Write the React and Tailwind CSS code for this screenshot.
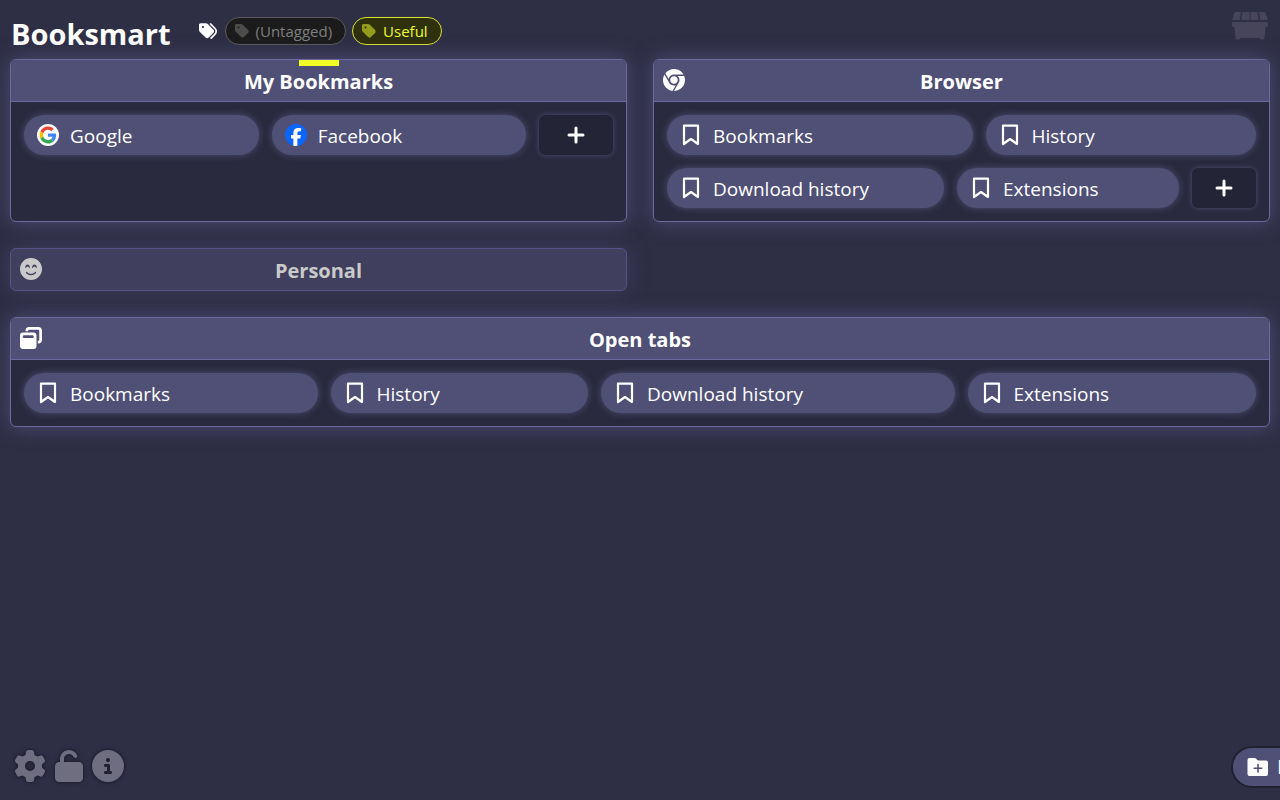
import { FaTags, FaTag, FaChrome, FaGear, FaUnlock, FaCircleInfo, FaFaceSmileBeam, FaWindowRestore } from 'react-icons/fa6'

const panelBase = 'rounded-md border border-[#6b69a0] overflow-clip bg-[#2a2a3e] shadow-[0_0_20px_#504f76]'
const iconButton = 'text-[#6f6e80] drop-shadow-[0_0_2px_#14141f]'

function GoogleIcon() {
  return (
    <svg viewBox="0 0 48 48" className="size-[22px]" aria-hidden="true">
      <circle cx="24" cy="24" r="24" fill="#fff" />
      <g transform="translate(5.5 5.5) scale(0.77)">
        <path fill="#EA4335" d="M24 9.5c3.54 0 6.71 1.22 9.21 3.6l6.85-6.85C35.9 2.38 30.47 0 24 0 14.62 0 6.51 5.38 2.56 13.22l7.98 6.19C12.43 13.72 17.74 9.5 24 9.5z" />
        <path fill="#4285F4" d="M46.98 24.55c0-1.57-.15-3.09-.38-4.55H24v9.02h12.94c-.58 2.96-2.26 5.48-4.78 7.18l7.73 6c4.51-4.18 7.09-10.36 7.09-17.65z" />
        <path fill="#FBBC05" d="M10.53 28.59c-.48-1.45-.76-2.99-.76-4.59s.27-3.14.76-4.59l-7.98-6.19C.92 16.46 0 20.12 0 24c0 3.88.92 7.54 2.56 10.78l7.97-6.19z" />
        <path fill="#34A853" d="M24 48c6.48 0 11.93-2.13 15.89-5.81l-7.73-6c-2.15 1.45-4.92 2.3-8.16 2.3-6.26 0-11.57-4.22-13.47-9.91l-7.98 6.19C6.51 42.62 14.62 48 24 48z" />
      </g>
    </svg>
  )
}

function FacebookIcon() {
  return (
    <svg viewBox="0 0 24 24" className="size-[22px]" aria-hidden="true">
      <circle cx="12" cy="12" r="12" fill="#0866ff" />
      <path fill="#fff" d="M9.1 23.6v-7.9H6.6V12h2.5v-1.600c0-4.1 1.9-6 5.9-6 .8 0 2.1.2 2.6.3V8c-.3 0-.8 0-1.400 0-2 0-2.700.7-2.700 2.700V12h3.900l-.7 3.700h-3.200v8.100c-1.500.2-3 .1-4.400-.2z" />
    </svg>
  )
}

function BookmarkIcon() {
  return (
    <svg viewBox="0 0 22 22" className="size-[22px]" fill="none" stroke="currentColor" strokeWidth="2.2" strokeLinejoin="round" aria-hidden="true">
      <path d="M4 1.600h14v18.400l-7-5-7 5z" />
    </svg>
  )
}

function PlusIcon() {
  return (
    <svg viewBox="0 0 20 20" className="size-5" stroke="currentColor" strokeWidth="3" strokeLinecap="round" aria-hidden="true">
      <path d="M10 3v14M3 10h14" />
    </svg>
  )
}

function FolderPlusIcon() {
  return (
    <svg viewBox="0 0 22 20" className="h-5 w-[22px] shrink-0" aria-hidden="true">
      <path fill="currentColor" d="M2.500 1h5q1 0 1.700.8l.8 1q.7.7 1.700.7h7.300q2 0 2 2V17q0 2-2 2H2.500q-2 0-2-2V3q0-2 2-2z" />
      <path stroke="#504f76" strokeWidth="1.600" strokeLinecap="round" d="M11 7.500v7.500M7.200 11.250h7.600" />
    </svg>
  )
}

function StallIcon() {
  return (
    <svg viewBox="0 0 36 28" className="h-7 w-9" fill="currentColor" aria-hidden="true">
      <path d="M4 0h5L7.800 8H1.500Q0 8 .5 6.500L2.500 1Q3 0 4 0z" />
      <path d="M10.500 0h7v8H9.300z" />
      <path d="M18.500 0h7l1.200 8h-8.200z" />
      <path d="M27 0h5q1 0 1.500 1l2 5.500Q36 8 34.500 8h-6.300z" />
      <path d="M1.500 10h33q1.500 0 1.500 1.500v2q0 1.500-1.500 1.500L33.500 16l-1 10.500q0 1-1 1H29q-1 0-1-1V26H8v.5q0 1-1 1H4.500q-1 0-1-1L2.500 16 1.500 15Q0 15 0 13.500v-2Q0 10 1.500 10z" />
    </svg>
  )
}

function Pill({ icon, label, className }) {
  return (
    <a href="#" className={`flex h-10 min-w-0 items-center gap-2.5 rounded-[20px] bg-[#504f76] pr-4 pl-3 text-[19px] whitespace-nowrap shadow-[0_0_7px_#504f76] ${className}`}>
      <span className="flex w-6 shrink-0 justify-center">{icon ?? <BookmarkIcon />}</span>
      <span className="pt-0.5">{label}</span>
    </a>
  )
}

function AddButton({ className }) {
  return (
    <button aria-label="Add bookmark" className={`flex h-10 items-center justify-center rounded-md bg-[#242437] shadow-[0_0_5px_#504f76] ${className}`}>
      <PlusIcon />
    </button>
  )
}

function Panel({ title, icon, children, className = '' }) {
  return (
    <section className={`${panelBase} ${className}`}>
      <header className="grid h-[42px] grid-cols-[1fr_auto_1fr] items-center border-b border-[#6b69a0] bg-[#504f76] px-[9px]">
        <span className="pb-0.5">{icon}</span>
        <h2 className="pt-0.5 text-xl font-bold">{title}</h2>
      </header>
      <div className="flex flex-wrap gap-[13px] p-[13px]">{children}</div>
    </section>
  )
}

export default function App() {
  return (
    <div className="relative flex min-h-screen flex-col overflow-hidden bg-[#2e2e45] font-['Open_Sans','Noto_Sans',sans-serif] text-white">
      <header className="flex h-[59px] items-center pr-3 pl-[11px]">
        <h1 className="pt-2 text-[29px] font-bold">Booksmart</h1>
        <div className="ml-7 flex items-center gap-1.5 pt-[3px]">
          <FaTags className="mr-0.5 size-[18px]" aria-hidden="true" />
          <button className="flex h-7 items-center gap-1.5 rounded-full border border-[#5c5c5c] bg-[#1b1b1b] pr-[13px] pl-2 text-[15px] text-[#7f7f7f]">
            <FaTag className="size-4 text-[#4c4c4c]" /><span>(Untagged)</span>
          </button>
          <button className="flex h-7 items-center gap-1.5 rounded-full border border-[#dbe62f] bg-[#2f300c] pr-[13px] pl-2 text-[15px] text-[#f2ff26]">
            <FaTag className="size-4 text-[#959d1a]" /><span>Useful</span>
          </button>
        </div>
        <button aria-label="Marketplace" className="ml-auto self-start pt-3 text-[#46455a]"><StallIcon /></button>
      </header>

      <main className="grid grid-cols-2 gap-[26px] px-2.5">
        <div className="relative flex">
          <Panel title="My Bookmarks" className="flex-1">
            <Pill label="Google" icon={<GoogleIcon />} className="flex-[1_1_230px]" />
            <Pill label="Facebook" icon={<FacebookIcon />} className="flex-[1_1_250px]" />
            <AddButton className="flex-[1_1_69px]" />
          </Panel>
          <span className="absolute top-px left-1/2 h-1.5 w-10 -translate-x-1/2 bg-[#f2ff26]" />
        </div>
        <Panel title="Browser" icon={<FaChrome className="size-[22px]" />}>
          <Pill label="Bookmarks" className="flex-[1_1_300px]" />
          <Pill label="History" className="flex-[1_1_265px]" />
          <Pill label="Download history" className="flex-[1_1_272px]" />
          <Pill label="Extensions" className="flex-[1_1_217px]" />
          <AddButton className="flex-[1_1_59px]" />
        </Panel>
        <section className="rounded-md border border-[#55538a] bg-[#403f5e] text-[#cacaca] shadow-[0_0_20px_#403f5e]">
          <header className="grid h-[41px] grid-cols-[1fr_auto_1fr] items-center px-[9px]">
            <span className="pb-0.5"><FaFaceSmileBeam className="size-[22px]" /></span>
            <h2 className="pt-0.5 text-xl font-bold">Personal</h2>
          </header>
        </section>
        <Panel title="Open tabs" icon={<FaWindowRestore className="size-[22px]" />} className="col-span-2">
          <Pill label="Bookmarks" className="flex-[1_1_280px]" />
          <Pill label="History" className="flex-[1_1_244px]" />
          <Pill label="Download history" className="flex-[1_1_340px]" />
          <Pill label="Extensions" className="flex-[1_1_275px]" />
        </Panel>
      </main>

      <footer className="mt-auto flex items-center gap-[7px] px-3.5 pb-[18px]">
        <button aria-label="Settings" className={iconButton}><FaGear className="size-8" /></button>
        <button aria-label="Unlock" className={iconButton}><FaUnlock className="size-8" /></button>
        <button aria-label="About" className={iconButton}><FaCircleInfo className="size-8" /></button>
      </footer>
      <button className="absolute bottom-3 left-full -ml-[49px] flex h-[42px] items-center gap-2 rounded-full border-2 border-[#20202f] bg-[#504f76] px-3.5 text-xl whitespace-nowrap">
        <FolderPlusIcon />New group
      </button>
    </div>
  )
}
